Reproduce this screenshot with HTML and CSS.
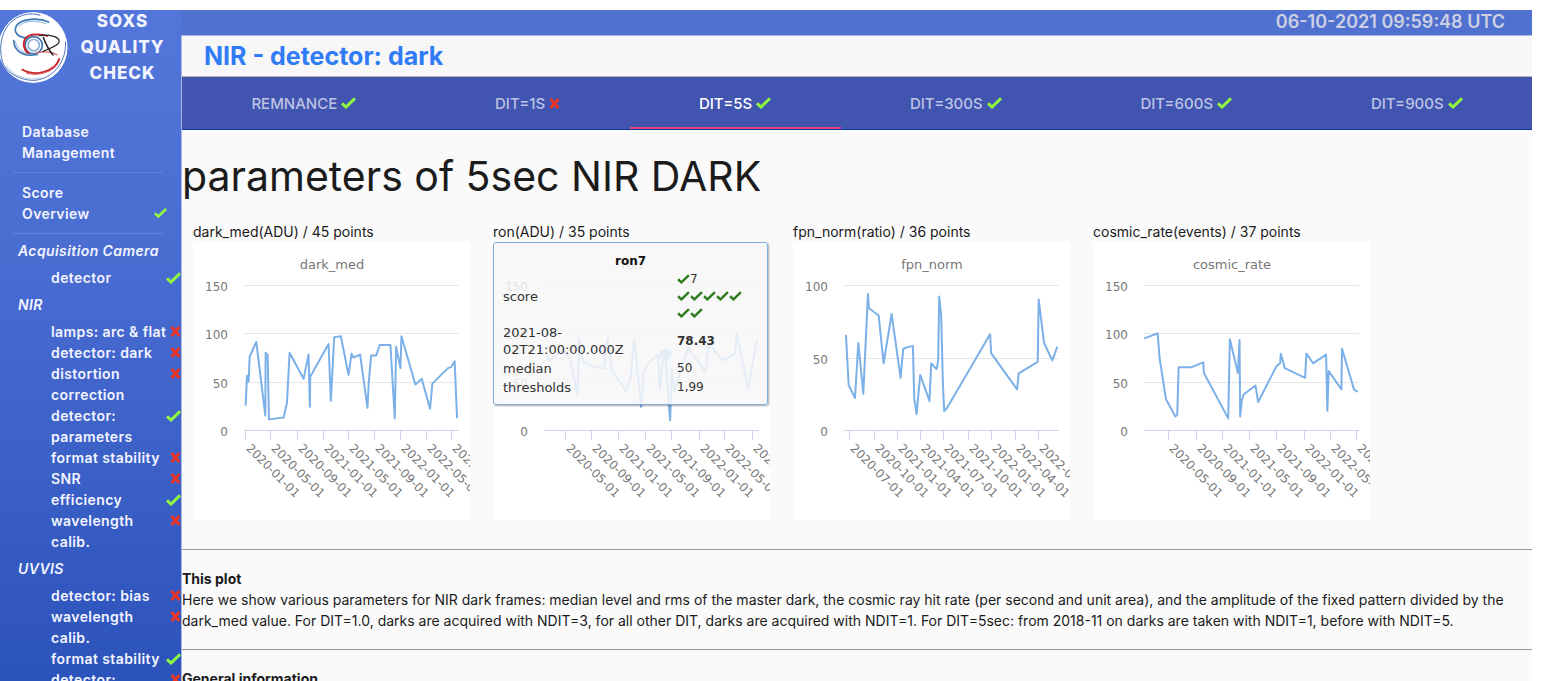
FILE: index.html
```html
<!DOCTYPE html>
<html lang="en">
<head>
    <meta charset="UTF-8">
    <meta name="viewport" content="width=device-width, initial-scale=1.0">
    <title>SOXS Quality Check</title>
    <link rel="stylesheet" href="styles.css">
</head>
<body>
    <!-- Shared icons -->
    <svg class="icon-defs" aria-hidden="true">
        <symbol id="check" viewBox="0 0 15 12">
            <path d="M1 6.3 L5 10 L14 1.4" fill="none" stroke="currentColor" stroke-width="3"/>
        </symbol>
        <symbol id="cross" viewBox="0 0 11 11">
            <path d="M1.5 1 L9.5 10 M9.5 1 L1.5 10" fill="none" stroke="currentColor" stroke-width="2.8"/>
        </symbol>
    </svg>

    <div class="app">
        <!-- Sidebar -->
        <aside class="sidebar">
            <div class="brand">
                <svg class="brand-logo" viewBox="0 32 204 214" aria-hidden="true">
                    <ellipse cx="99" cy="139" rx="104" ry="107" fill="#fff"/>
                    <g fill="none" stroke-linecap="round">
                        <path d="M10 190 C-8 145 0 70 60 45 C82 36 105 36 120 42" stroke="#4774b8" stroke-width="3"/>
                        <path d="M197 122 C201 190 150 240 95 238 C55 236 25 215 12 193" stroke="#4774b8" stroke-width="3"/>
                        <path d="M20 195 C45 230 85 240 125 230" stroke="#8fb0d8" stroke-width="2"/>
                        <path d="M146 62 C115 48 65 52 50 72 C38 92 52 108 82 111" stroke="#3c78b4" stroke-width="5"/>
                        <path d="M138 68 C110 55 72 57 56 75" stroke="#8fb0d8" stroke-width="3"/>
                        <path d="M41 118 C42 152 72 168 112 160" stroke="#3c78b4" stroke-width="5"/>
                        <path d="M46 122 C52 148 75 160 100 160" stroke="#8fb0d8" stroke-width="3"/>
                        <circle cx="101" cy="132" r="26" stroke="#3c78b4" stroke-width="5"/>
                        <circle cx="101" cy="132" r="17" stroke="#8fb0d8" stroke-width="5"/>
                        <path d="M142 104 C115 96 86 99 76 112 C66 128 73 150 86 156" stroke="#c92a31" stroke-width="6"/>
                        <path d="M108 156 C130 151 155 151 171 161" stroke="#d86065" stroke-width="4"/>
                        <path d="M67 206 C105 228 166 212 178 174" stroke="#c92a31" stroke-width="6"/>
                        <path d="M80 217 C120 227 159 211 173 188" stroke="#d86065" stroke-width="3"/>
                        <path d="M118 103 C148 99 184 107 177 123 C170 138 145 141 129 151" stroke="#28282c" stroke-width="4"/>
                        <path d="M130 109 C139 132 149 150 159 161" stroke="#28282c" stroke-width="5"/>
                    </g>
                </svg>
                <div class="brand-name">SOXS<br>QUALITY<br>CHECK</div>
            </div>

            <nav>
                <div class="nav-block">
                    <a href="#">Database Management</a>
                </div>
                <div class="nav-block">
                    <a href="#">Score Overview</a>
                    <svg class="icon check"><use href="#check"/></svg>
                </div>

                <h2 class="nav-heading">Acquisition Camera</h2>
                <ul class="nav-list">
                    <li><a href="#">detector</a><svg class="icon check"><use href="#check"/></svg></li>
                </ul>

                <h2 class="nav-heading">NIR</h2>
                <ul class="nav-list">
                    <li><a href="#">lamps: arc &amp; flat</a><svg class="icon cross"><use href="#cross"/></svg></li>
                    <li><a href="#">detector: dark</a><svg class="icon cross"><use href="#cross"/></svg></li>
                    <li><a href="#">distortion correction</a><svg class="icon cross"><use href="#cross"/></svg></li>
                    <li><a href="#">detector: parameters</a><svg class="icon check"><use href="#check"/></svg></li>
                    <li><a href="#">format stability</a><svg class="icon cross"><use href="#cross"/></svg></li>
                    <li><a href="#">SNR</a><svg class="icon cross"><use href="#cross"/></svg></li>
                    <li><a href="#">efficiency</a><svg class="icon check"><use href="#check"/></svg></li>
                    <li><a href="#">wavelength calib.</a><svg class="icon cross"><use href="#cross"/></svg></li>
                </ul>

                <h2 class="nav-heading">UVVIS</h2>
                <ul class="nav-list">
                    <li><a href="#">detector: bias</a><svg class="icon cross"><use href="#cross"/></svg></li>
                    <li><a href="#">wavelength calib.</a><svg class="icon cross"><use href="#cross"/></svg></li>
                    <li><a href="#">format stability</a><svg class="icon check"><use href="#check"/></svg></li>
                    <li><a href="#">detector:</a><svg class="icon cross"><use href="#cross"/></svg></li>
                </ul>
            </nav>
        </aside>

        <!-- Content -->
        <div class="content">
            <header class="topbar">
                <time>06-10-2021 09:59:48 UTC</time>
            </header>

            <main class="panel">
                <h1 class="panel-title">NIR - detector: dark</h1>

                <div class="tabs" role="tablist">
                    <button class="tab" role="tab">REMNANCE <svg class="icon check"><use href="#check"/></svg></button>
                    <button class="tab" role="tab">DIT=1S <svg class="icon cross"><use href="#cross"/></svg></button>
                    <button class="tab active" role="tab" aria-selected="true">DIT=5S <svg class="icon check"><use href="#check"/></svg></button>
                    <button class="tab" role="tab">DIT=300S <svg class="icon check"><use href="#check"/></svg></button>
                    <button class="tab" role="tab">DIT=600S <svg class="icon check"><use href="#check"/></svg></button>
                    <button class="tab" role="tab">DIT=900S <svg class="icon check"><use href="#check"/></svg></button>
                </div>

                <h2 class="page-title">parameters of 5sec NIR DARK</h2>

                <div class="charts">
                    <figure class="chart">
                        <figcaption>dark_med(ADU) / 45 points</figcaption>
                        <div class="chart-box" data-chart="dark_med"></div>
                    </figure>
                    <figure class="chart">
                        <figcaption>ron(ADU) / 35 points</figcaption>
                        <div class="chart-box" data-chart="ron">
                            <div class="tooltip">
                                <div class="tooltip-title">ron7</div>
                                <table>
                                    <tr>
                                        <td>score</td>
                                        <td>
                                            <svg class="icon check"><use href="#check"/></svg>7<br>
                                            <svg class="icon check"><use href="#check"/></svg><svg class="icon check"><use href="#check"/></svg><svg class="icon check"><use href="#check"/></svg><svg class="icon check"><use href="#check"/></svg><svg class="icon check"><use href="#check"/></svg><br>
                                            <svg class="icon check"><use href="#check"/></svg><svg class="icon check"><use href="#check"/></svg>
                                        </td>
                                    </tr>
                                    <tr>
                                        <td>2021-08-<br>02T21:00:00.000Z</td>
                                        <td><b>78.43</b></td>
                                    </tr>
                                    <tr>
                                        <td>median</td>
                                        <td>50</td>
                                    </tr>
                                    <tr>
                                        <td>thresholds</td>
                                        <td>1,99</td>
                                    </tr>
                                </table>
                            </div>
                        </div>
                    </figure>
                    <figure class="chart">
                        <figcaption>fpn_norm(ratio) / 36 points</figcaption>
                        <div class="chart-box" data-chart="fpn_norm"></div>
                    </figure>
                    <figure class="chart">
                        <figcaption>cosmic_rate(events) / 37 points</figcaption>
                        <div class="chart-box" data-chart="cosmic_rate"></div>
                    </figure>
                </div>

                <section class="info">
                    <h3>This plot</h3>
                    <p>Here we show various parameters for NIR dark frames: median level and rms of the master dark, the cosmic ray hit rate (per second and unit area), and the amplitude of the fixed pattern divided by the dark_med value. For DIT=1.0, darks are acquired with NDIT=3, for all other DIT, darks are acquired with NDIT=1. For DIT=5sec: from 2018-11 on darks are taken with NDIT=1, before with NDIT=5.</p>
                </section>
                <section class="info">
                    <h3>General information</h3>
                </section>
            </main>
        </div>
    </div>

    <script src="script.js"></script>
</body>
</html>
```

FILE: styles.css
```css
* {
    margin: 0;
    padding: 0;
    box-sizing: border-box;
}

body {
    background-color: #fff;
    color: #1b1b1b;
    font-family: Inter, "Liberation Sans", sans-serif;
    font-size: 14px;
    line-height: 21px;
    padding: 10px 16px 0 0;
    overflow: hidden;
}

a {
    color: inherit;
    text-decoration: none;
}

.icon-defs {
    position: absolute;
    width: 0;
    height: 0;
}

.icon {
    flex: none;
}

.icon.check {
    width: 15px;
    height: 12px;
    color: #8ff93f;
}

.icon.cross {
    width: 11px;
    height: 11px;
    color: #ee3324;
}

.app {
    display: flex;
    height: calc(100vh - 10px);
    overflow: hidden;
}

/* Sidebar */
.sidebar {
    flex: none;
    width: 181px;
    background: linear-gradient(#5276da, #4a6dd2 35%, #2c53bb);
    color: #f2f4ff;
    font-weight: 600;
    letter-spacing: 0.4px;
}

.brand {
    display: flex;
    align-items: center;
    margin-top: -2px;
    margin-bottom: 35px;
    padding-right: 4px;
}

.brand-logo {
    flex: none;
    width: 68px;
    height: 71px;
}

.brand-name {
    flex: 1;
    font-size: 17px;
    font-weight: 800;
    line-height: 26px;
    letter-spacing: 1px;
    text-align: center;
}

.nav-block {
    display: flex;
    align-items: flex-end;
    justify-content: space-between;
    margin: 0 18px 0 13px;
    padding: 0 0 9px 9px;
    border-bottom: 1px solid #5f80dc;
}

.nav-block + .nav-block {
    margin-top: 9px;
}

.nav-block a {
    width: 100px;
}

.nav-block .icon {
    margin: 0 -4px 5px 0;
    width: 13px;
}

.nav-heading {
    margin: 6px 0 6px 18px;
    font-size: 14px;
    font-style: italic;
    font-weight: 600;
}

.nav-list {
    list-style: none;
    padding-left: 51px;
}

.nav-list li {
    display: flex;
    justify-content: space-between;
}

.nav-list a {
    max-width: 118px;
}

.nav-list .icon {
    margin-top: 5px;
}

.nav-list .cross {
    margin-left: -4px;
}

/* Top bar and panel */
.content {
    flex: 1;
    display: flex;
    flex-direction: column;
    min-width: 0;
}

.topbar {
    flex: none;
    height: 25px;
    padding-right: 27px;
    background-color: #5071cf;
    color: #cdd0e4;
    font-size: 18px;
    font-weight: 600;
    line-height: 24px;
    text-align: right;
}

.panel {
    flex: 1;
    min-height: 0;
    overflow: hidden;
    background-color: #fafafa;
    border: 1px solid #a9b8e6;
    border-width: 1px 0 0 1px;
}

.panel-title {
    padding: 5px 22px 4px;
    background-color: #f7f7f7;
    border-bottom: 1px solid #b4b4b8;
    color: #2f7cf6;
    font-size: 25px;
    font-weight: 700;
    line-height: 31px;
}

.tabs {
    display: flex;
    background-color: #4054b0;
    border-bottom: 1px solid #1136a0;
    overflow: hidden;
}

.tab {
    flex: 1 0 auto;
    height: 52px;
    padding: 0 68px;
    border: 0;
    background: none;
    color: #bdc3e4;
    font: inherit;
    font-size: 15px;
    font-weight: 500;
    white-space: nowrap;
    cursor: pointer;
}

.tab.active {
    color: #fff;
    box-shadow: inset 0 -2px #e6457c;
}

.page-title {
    margin-top: 20px;
    font-size: 41px;
    font-weight: 400;
    line-height: 52px;
}

/* Charts */
.charts {
    display: flex;
    gap: 23px;
    padding: 19px 11px 29px;
}

.chart {
    flex: none;
    width: 277px;
}

.chart-box {
    position: relative;
    height: 278px;
    background-color: #fff;
}

.chart-svg {
    display: block;
    width: 100%;
    height: 100%;
    overflow: hidden;
    font-family: "DejaVu Sans", sans-serif;
    font-size: 12px;
    fill: #777;
}

.chart-svg .title {
    font-size: 13px;
    text-anchor: middle;
}

.chart-svg .y-label {
    text-anchor: end;
}

.chart-svg .grid {
    stroke: #e6e6e6;
}

.chart-svg .axis {
    stroke: #ccd6eb;
}

.chart-svg .series {
    fill: none;
    stroke: #7cb0e8;
    stroke-width: 2;
    stroke-linejoin: round;
    stroke-linecap: round;
}

.chart-svg .marker {
    fill: #7cb0e8;
}

.tooltip {
    position: absolute;
    top: 0;
    left: 0;
    width: 275px;
    padding: 10px 9px 7px;
    background-color: rgba(247, 247, 247, 0.85);
    border: 1px solid #83ade0;
    border-radius: 3px;
    box-shadow: 1px 1px 2px rgba(0, 0, 0, 0.35);
    color: #333;
    font-family: "DejaVu Sans", sans-serif;
    font-size: 13px;
    line-height: 17px;
}

.tooltip-title {
    color: #111;
    font-size: 12px;
    font-weight: 700;
    text-align: center;
}

.tooltip table {
    width: 100%;
    border-collapse: collapse;
}

.tooltip td {
    padding: 1px 0;
    vertical-align: middle;
}

.tooltip td:last-child {
    width: 81px;
    font-size: 12px;
}

.tooltip .icon {
    width: 13px;
    height: 10px;
    color: #2f7d1e;
    vertical-align: -1px;
}

/* Notes under the charts */
.info {
    padding: 18px 0;
    border-top: 1px solid #999;
}

.info h3 {
    font-size: 14px;
    font-weight: 700;
}
```

FILE: script.js
```js
// Plot area inside the 277x278 chart
const plot = { left: 51, top: 43, width: 215, height: 145 };

// x runs from 0 to 646 over the time axis
const xRange = 646;

const charts = {
    dark_med: {
        max: 150,
        ticks: [4, 81, 161, 238, 313, 391, 470, 547, 624],
        labels: ['2020-01-01', '2020-05-01', '2020-09-01', '2021-01-01', '2021-05-01', '2021-09-01', '2022-01-01', '2022-05-01', '2022-09-01'],
        data: [[5, 26], [9, 56], [14, 50], [17, 76], [37, 91], [64, 15], [65, 80], [71, 78], [75, 11], [119, 13], [129, 28],
            [137, 80], [179, 53], [194, 78], [198, 24], [199, 55], [254, 89], [261, 30], [271, 96], [291, 97], [314, 57],
            [323, 79], [329, 75], [349, 78], [371, 23], [375, 50], [382, 77], [397, 77], [408, 88], [440, 88], [453, 12],
            [457, 86], [470, 64], [473, 97], [515, 47], [534, 53], [559, 22], [566, 48], [613, 64], [622, 65], [633, 71], [640, 13]]
    },
    ron: {
        max: 150,
        ticks: [64, 144, 224, 304, 383, 467, 543, 627],
        labels: ['2020-05-01', '2020-09-01', '2021-01-01', '2021-05-01', '2021-09-01', '2022-01-01', '2022-05-01', '2022-09-01'],
        marker: [365, 78],
        data: [[8, 78], [16, 71], [53, 83], [78, 74], [101, 36], [106, 95], [118, 71], [153, 65], [180, 64], [191, 95],
            [205, 61], [246, 40], [260, 54], [271, 94], [292, 24], [301, 61], [318, 71], [343, 78], [348, 42], [358, 74],
            [365, 78], [372, 40], [379, 10], [384, 64], [392, 40], [433, 85], [486, 60], [494, 88], [508, 84], [536, 72],
            [574, 79], [579, 99], [613, 43], [640, 93]]
    },
    fpn_norm: {
        max: 100,
        ticks: [17, 91, 160, 230, 300, 374, 444, 514, 584],
        labels: ['2020-07-01', '2020-10-01', '2021-01-01', '2021-04-01', '2021-07-01', '2021-10-01', '2022-01-01', '2022-04-01', '2022-07-01'],
        data: [[6, 65], [14, 31], [33, 22], [43, 60], [58, 25], [72, 94], [75, 84], [104, 79], [119, 46], [143, 80], [170, 36],
            [178, 56], [189, 57], [207, 58], [211, 22], [218, 11], [229, 38], [257, 20], [262, 46], [278, 42], [283, 48],
            [286, 92], [292, 79], [297, 33], [301, 13], [309, 15], [439, 66], [442, 53], [520, 28], [525, 39], [582, 47],
            [585, 90], [601, 60], [626, 48], [640, 57]]
    },
    cosmic_rate: {
        max: 150,
        ticks: [74, 157, 236, 317, 397, 481, 560, 639],
        labels: ['2020-05-01', '2020-09-01', '2021-01-01', '2021-05-01', '2021-09-01', '2022-01-01', '2022-05-01', '2022-09-01'],
        data: [[3, 95], [41, 100], [47, 74], [66, 32], [94, 14], [100, 16], [104, 65], [143, 65], [178, 70], [180, 59],
            [253, 12], [258, 94], [282, 59], [287, 93], [289, 14], [294, 31], [300, 37], [335, 46], [343, 29], [398, 66],
            [409, 69], [411, 79], [423, 64], [484, 54], [488, 79], [508, 69], [547, 78], [551, 20], [555, 61], [593, 42],
            [595, 84], [631, 42], [640, 40]]
    }
};

function drawChart(name, chart) {
    const x = v => plot.left + v / xRange * plot.width;
    const y = v => plot.top + plot.height - v / chart.max * plot.height;
    const right = plot.left + plot.width;
    const bottom = plot.top + plot.height;
    let svg = `<text class="title" x="139" y="27">${name}</text>`;

    for (let v = 0; v <= chart.max; v += 50) {
        const line = Math.round(y(v)) + 0.5;
        svg += `<path class="${v ? 'grid' : 'axis'}" d="M${plot.left} ${line} H${right}"/>`;
        svg += `<text class="y-label" x="35" y="${Math.round(y(v)) + 6}">${v}</text>`;
    }

    chart.ticks.forEach((tick, i) => {
        const tx = Math.floor(x(tick)) + 0.5;
        svg += `<path class="axis" d="M${tx} ${bottom} v10"/>`;
        svg += `<text transform="translate(${tx} 207) rotate(45)">${chart.labels[i]}</text>`;
    });

    svg += `<polyline class="series" points="${chart.data.map(p => x(p[0]) + ',' + y(p[1])).join(' ')}"/>`;
    if (chart.marker) {
        svg += `<circle class="marker" cx="${x(chart.marker[0])}" cy="${y(chart.marker[1])}" r="6"/>`;
    }
    return `<svg class="chart-svg" viewBox="0 0 277 278">${svg}</svg>`;
}

document.querySelectorAll('.chart-box').forEach(box => {
    const name = box.dataset.chart;
    box.insertAdjacentHTML('afterbegin', drawChart(name, charts[name]));
});
```
